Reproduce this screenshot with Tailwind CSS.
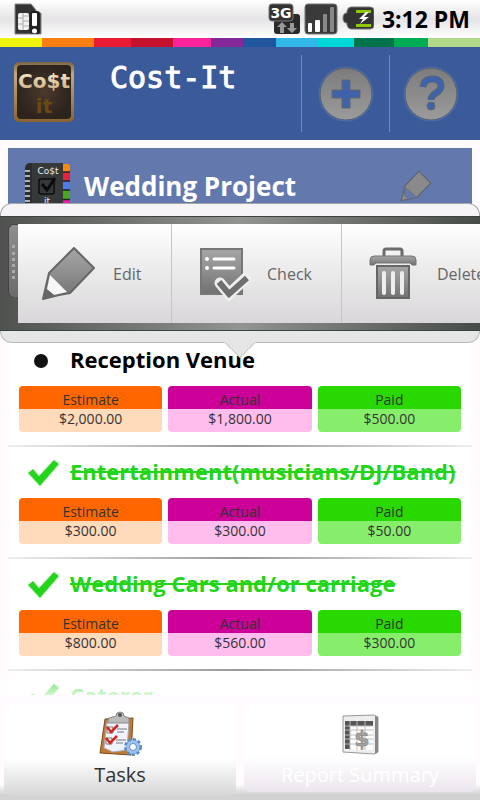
<!DOCTYPE html>
<html lang="en">
<head>
  <meta charset="UTF-8" />
  <meta name="viewport" content="width=device-width, initial-scale=1" />
  <title>Cost-It</title>
  <script src="https://cdn.jsdelivr.net/npm/@tailwindcss/browser@4"></script>
</head>
<body class="bg-[#fffbff] font-['Open_Sans','Noto_Sans',sans-serif] text-black h-screen flex flex-col overflow-hidden">

  <!-- Status bar -->
  <div class="h-[38px] shrink-0 flex items-center justify-between pl-3 pr-[10px] bg-linear-to-b from-white via-[#e6e4e6] to-white">
    <svg class="w-8 h-8" viewBox="0 0 32 32" aria-label="SIM card">
      <path d="M3 1h16l5 6v3h5v21H3z" fill="#333" stroke="#888" stroke-width="1"/>
      <rect x="6" y="10" width="11" height="17" rx="2" fill="#f2f2f2"/>
      <path d="M6 15h5M6 21h5M11 10v17M11 13h6M11 18h6M11 23h6" stroke="#aaa" fill="none"/>
      <rect x="18" y="8" width="10" height="23" rx="3" fill="#222"/>
      <rect x="20" y="10" width="5" height="13" rx="1" fill="#fff"/>
      <circle cx="22.500" cy="28" r="2.500" fill="#fff"/>
    </svg>
    <div class="flex items-center gap-1">
      <svg class="w-8 h-8" viewBox="0 0 32 32" aria-label="3G">
        <rect x="6" y="11" width="26" height="20" rx="3" fill="#2a2a2a"/>
        <rect x="1" y="1" width="24" height="17" rx="3" fill="#333" stroke="#777"/>
        <text x="13" y="15" text-anchor="middle" font-family="DejaVu Sans" font-weight="bold" font-size="14" fill="#fff">3G</text>
        <path d="M14 19l5 5h-3v6h-4v-6H9zM24 30l-5-5h3v-5h4v5h3z" fill="#999"/>
      </svg>
      <svg class="w-[34px] h-8" viewBox="0 0 34 32" aria-label="Signal">
        <rect x="1" y="1" width="32" height="30" rx="3" fill="#3a3a3a" stroke="#777"/>
        <rect x="4" y="20" width="4" height="9" rx="1" fill="#fff"/>
        <rect x="11" y="17" width="5" height="12" rx="1" fill="#fff"/>
        <rect x="19" y="11" width="4" height="18" rx="1" fill="#888"/>
        <rect x="26" y="4" width="4" height="25" rx="1" fill="#888"/>
      </svg>
      <svg class="w-8 h-8" viewBox="0 0 32 32" aria-label="Battery charging">
        <path d="M9 4h19q4 0 4 4v14q0 4-4 4H9q-3 0-4-4v-2q-4 0-4-5t4-5V8q1-4 4-4z" fill="#333" stroke="#777"/>
        <path d="M14 7h15v3H14zM14 21h15v3H14z" fill="#8fc800"/>
        <path d="M24 9l-7 7h4l-3 5 9-7h-5l5-5z" fill="#fff"/>
      </svg>
      <span class="ml-1 text-[23px] leading-8 font-bold">3:12 PM</span>
    </div>
  </div>

  <!-- Colour stripe -->
  <div class="h-[9px] shrink-0 flex">
    <i class="grow-42 bg-[#f0f40c]"></i>
    <i class="grow-52 bg-[#fb7f12]"></i>
    <i class="grow-37 bg-[#e91a33]"></i>
    <i class="grow-42 bg-[#c4122f]"></i>
    <i class="grow-38 bg-[#fb2399]"></i>
    <i class="grow-32 bg-[#84289a]"></i>
    <i class="grow-33 bg-[#20569e]"></i>
    <i class="grow-42 bg-[#31b8e9]"></i>
    <i class="grow-36 bg-[#00d7d7]"></i>
    <i class="grow-40 bg-[#00734b]"></i>
    <i class="grow-34 bg-[#00ac53]"></i>
    <i class="grow-52 bg-[#b3d88a]"></i>
  </div>

  <!-- Header -->
  <header class="h-[93px] shrink-0 bg-[#3b5a9a] flex items-center">
    <svg class="w-[60px] h-[60px] ml-[14px] mb-1" viewBox="0 0 60 60" aria-label="Cost it logo">
      <defs>
        <linearGradient id="gold" x1="0" y1="0" x2="0" y2="1"><stop offset="0" stop-color="#7b6445"/><stop offset=".2" stop-color="#c9a878"/><stop offset="1" stop-color="#8a6430"/></linearGradient>
        <radialGradient id="brown"><stop offset="0" stop-color="#4b392c"/><stop offset="1" stop-color="#2c241d"/></radialGradient>
        <linearGradient id="cream" x1="0" y1="0" x2="0" y2="1"><stop offset="0" stop-color="#fff0d0"/><stop offset="1" stop-color="#c3a67c"/></linearGradient>
      </defs>
      <rect width="60" height="60" rx="5" fill="url(#gold)"/>
      <rect x="3" y="3" width="54" height="54" rx="4" fill="url(#brown)"/>
      <text x="30" y="26" text-anchor="middle" font-family="DejaVu Sans" font-weight="bold" font-size="20" fill="url(#cream)">Co$t</text>
      <text x="30" y="51" text-anchor="middle" font-family="DejaVu Sans" font-weight="bold" font-size="20" fill="#6b4814">it</text>
    </svg>
    <h1 class="ml-9 mb-8 grow font-['DejaVu_Sans_Mono',monospace] text-[30px] leading-9 text-white [-webkit-text-stroke:1px_white]">Cost-It</h1>
    <div class="flex h-[77px]">
      <button aria-label="Add" class="w-[88px] border-l border-[#7088bb] flex items-center justify-center">
        <svg class="w-14 h-14" viewBox="0 0 56 56">
          <defs><linearGradient id="disc" x1="0" y1="0" x2="0" y2="1"><stop offset="0" stop-color="#7c7c7c"/><stop offset="1" stop-color="#9b9b9b"/></linearGradient></defs>
          <circle cx="28" cy="28" r="27.500" fill="#5574b4" opacity=".7"/>
          <circle cx="28" cy="28" r="26" fill="url(#disc)" stroke="#55606f"/>
          <path d="M24 14h8v10h10v8H32v10h-8V32H14v-8h10z" fill="#3f62aa" stroke="#666" stroke-width="1"/>
        </svg>
      </button>
      <button aria-label="Help" class="w-[91px] border-l border-[#7088bb] flex items-center justify-center pr-2">
        <svg class="w-14 h-14" viewBox="0 0 56 56">
          <circle cx="28" cy="28" r="27.500" fill="#5574b4" opacity=".7"/>
          <circle cx="28" cy="28" r="26" fill="url(#disc)" stroke="#55606f"/>
          <path d="M20 21q1-8 9-8 9 0 9 7 0 4-5 7-5 3-5 7" fill="none" stroke="#666" stroke-width="7"/>
          <path d="M20 21q1-8 9-8 9 0 9 7 0 4-5 7-5 3-5 7" fill="none" stroke="#3f62aa" stroke-width="5.500"/>
          <circle cx="28" cy="40" r="4" fill="#3f62aa" stroke="#666"/>
        </svg>
      </button>
    </div>
  </header>

  <!-- Task list with the quick action popup over it -->
  <main class="relative grow min-h-0 overflow-hidden px-2 pt-2">
    <section class="h-[187px] bg-[#6379ae] flex items-start pt-[14px] pl-4 pr-10">
      <svg class="w-12 h-14 shrink-0" viewBox="0 0 48 56" aria-label="Notebook">
        <rect x="37" y="2" width="9" height="8" rx="3" fill="#fb8a0c"/>
        <rect x="37" y="10" width="9" height="9" fill="#e8203c"/>
        <rect x="37" y="19" width="9" height="9" fill="#4d7ce8"/>
        <rect x="37" y="28" width="9" height="10" fill="#4aa81c"/>
        <rect x="37" y="38" width="9" height="10" fill="#f21ea8"/>
        <path d="M37 10h9M37 19h9M37 28h9M37 37.500h9" stroke="#222" stroke-width="1.500"/>
        <rect x="1" y="1" width="38" height="55" rx="5" fill="#2b2d2d"/>
        <path d="M8 1h31v55H8z" fill="#35393a"/>
        <path d="M1 9h5M1 14h5M1 19h5M1 24h5M1 29h5M1 34h5M1 39h5" stroke="#ddd" stroke-width="1.500"/>
        <text x="24" y="12" text-anchor="middle" font-family="DejaVu Sans" font-size="9" fill="#eee">Co$t</text>
        <rect x="15" y="17" width="15" height="15" rx="2" fill="none" stroke="#0c0c0c" stroke-width="1.500"/>
        <path d="M18 22l5 6 8-12" fill="none" stroke="#0a0a0a" stroke-width="3"/>
        <text x="23" y="42" text-anchor="middle" font-family="DejaVu Sans" font-size="9" fill="#eee">it</text>
      </svg>
      <h2 class="ml-3 mt-[6px] grow text-[26px] leading-9 font-bold text-white">Wedding Project</h2>
      <button aria-label="Edit project" class="mt-2">
        <svg class="w-8 h-8" viewBox="0 0 54 54">
          <path d="M32 2L52 22 29 46 2 52 8 27z" fill="#8a8a8a" stroke="#5e6370" stroke-width="2"/>
          <path d="M9 29l19 17-14 3-7-7z" fill="#6379ae" stroke="#666"/>
        </svg>
      </button>
    </section>

    <ul id="taskList" class="bg-white"></ul>

    <!-- Quick action popup -->
    <div class="absolute left-0 right-0 top-[63px]">
      <div class="h-[13px] bg-[#f6f4f6] border border-b-0 border-[#a3a6a8] rounded-t-xl"></div>
      <div class="flex py-[7px] bg-linear-to-r from-[#505250] via-[#929492] to-[#484c48] border-y border-[#3c443e] overflow-hidden">
        <div class="w-[18px] shrink-0 flex justify-end">
          <div class="w-[10px] h-[73px] rounded-l-md bg-linear-to-b from-[#8e8e8e] to-[#6c6c6c] border-l border-t border-[#444] flex justify-center pt-5">
            <div class="w-[3px] h-[34px] border-l-3 border-dotted border-[#aaa]"></div>
          </div>
        </div>
        <div class="flex h-[99px] shrink-0 text-base text-[#666] bg-linear-to-b from-white via-[#efeeef] via-40% to-[#d9d7d9]">
          <button class="w-[154px] flex items-center gap-4 pl-[23px] border-r border-[#c6c4c6]">
            <svg class="w-14 h-14 shrink-0" viewBox="0 0 56 56">
              <defs><linearGradient id="lead" x1="0" y1="0" x2="0" y2="1"><stop offset="0" stop-color="#a5a5a5"/><stop offset=".5" stop-color="#8e8e8e"/><stop offset="1" stop-color="#707070"/></linearGradient></defs>
              <path d="M33 2L53 22 29 47 18 49 2 53 8 27z" fill="url(#lead)" stroke="#666" stroke-width="2" stroke-linejoin="round"/>
              <path d="M9 29L26 46 13 49 6 43z" fill="#f6f6f6"/>
              <path d="M5 43l8 6-11 4z" fill="#666"/>
            </svg>
            <span>Edit</span>
          </button>
          <button class="w-[170px] flex items-center gap-4 pl-[23px] border-r border-[#c6c4c6]">
            <svg class="w-14 h-14 shrink-0" viewBox="0 0 56 56">
              <path d="M6 3h41v45H6z" fill="url(#lead)" stroke="#777" stroke-width="2"/>
              <path d="M19 13h20M19 22h20" stroke="#fff" stroke-width="3" stroke-linecap="round"/>
              <circle cx="12" cy="13" r="2" fill="#fff"/><circle cx="12" cy="22" r="2" fill="#fff"/>
              <path d="M25 37l9 11 17-16" fill="none" stroke="#f0eff0" stroke-width="11" stroke-linecap="round"/>
              <path d="M24 36l10 12 18-16" fill="none" stroke="#6f6f6f" stroke-width="6"/>
            </svg>
            <span>Check</span>
          </button>
          <button class="w-[170px] flex items-center gap-4 pl-[23px]">
            <svg class="w-14 h-14 shrink-0" viewBox="0 0 56 56">
              <path d="M19 10V5q0-2 2-2h14q2 0 2 2v5" fill="none" stroke="#6c6c6c" stroke-width="3"/>
              <path d="M9 10h38q4 0 4 4v5h-4l-2-2H11l-2 2H5v-5q0-4 4-4z" fill="url(#lead)" stroke="#777"/>
              <path d="M12 20h32v32H12z" fill="url(#lead)" stroke="#666" stroke-width="2"/>
              <path d="M19 27v20M28 27v20M37 27v20" stroke="#eee" stroke-width="4" stroke-linecap="round"/>
            </svg>
            <span>Delete</span>
          </button>
        </div>
      </div>
      <div class="h-[12px] bg-[#e6e6e6] border border-t-0 border-[#b8bab8] rounded-b-xl"></div>
      <svg class="absolute left-1/2 top-full -translate-x-1/2 -mt-px w-8 h-4" viewBox="0 0 32 16">
        <path d="M0 0h32L16 16z" fill="#e6e6e6"/>
        <path d="M1 0.500L16 15.500 31 0.500" fill="none" stroke="#b8bab8"/>
      </svg>
    </div>

    <div class="absolute inset-x-0 bottom-0 h-6 bg-linear-to-b from-white/10 to-white/80"></div>
  </main>

  <!-- Tabs -->
  <nav class="h-[105px] shrink-0 flex gap-2 px-1 pt-2 bg-linear-to-b from-[#fffbff] from-85% to-[#d2d2d2] to-95%">
    <a href="#tasks" class="flex-1 flex flex-col items-center pt-2 mb-1 rounded-lg bg-linear-to-b from-white from-60% to-[#d6d6d6] text-[#333]">
      <svg class="w-12 h-12" viewBox="0 0 48 48">
        <path d="M9 8l28-1-2 37-31-2z" fill="#c07a32" stroke="#7d4c1c"/>
        <path d="M11 10h22l-2 29-14 2-9-4z" fill="#eef3fd" stroke="#aab"/>
        <path d="M11 12l2-5 7-2q0-4 4-4t4 4l5 2v5z" fill="#bbb" stroke="#888"/>
        <circle cx="24" cy="4" r="2" fill="#555"/>
        <path d="M11 16h6v6h-6zM10 27h6v6h-6z" fill="#fff" stroke="#777"/>
        <path d="M21 18h10M21 21h7M20 29h10M20 32h7" stroke="#777"/>
        <path d="M11 16l4 5 7-7M10 27l4 5 7-7" fill="none" stroke="#d8201c" stroke-width="2.500"/>
        <circle cx="37" cy="36" r="7.500" fill="#8bb7e6" stroke="#5b8cc4" stroke-width="3" stroke-dasharray="3 2"/>
        <circle cx="37" cy="36" r="6.500" fill="#9cc3ec"/>
        <circle cx="37" cy="36" r="3.500" fill="#fff" stroke="#5b8cc4"/>
      </svg>
      <span class="text-xl leading-8">Tasks</span>
    </a>
    <a href="#report" class="flex-1 flex flex-col items-center pt-2 mb-2 rounded-lg bg-linear-to-b from-white from-60% to-[#ece6ee] text-white">
      <svg class="w-12 h-12" viewBox="0 0 48 48">
        <path d="M7 5l31-1 4 2v35l-4 2L7 41z" fill="#eee" stroke="#999"/>
        <path d="M39 5l3 1v35l-3 2z" fill="#888"/>
        <path d="M9 10h28v29H9z" fill="#fff"/>
        <path d="M9 10h28v5H9zM9 15h5v23H9z" fill="#555"/>
        <path d="M9 15h28M9 19h28M9 24h28M9 28h28M9 33h28M14 10v29M21 10v29M29 10v29" stroke="#bbb"/>
        <text x="26" y="35" text-anchor="middle" font-family="DejaVu Sans" font-weight="bold" font-size="22" fill="#a2a2a2" stroke="#777" stroke-width=".5">$</text>
      </svg>
      <span class="text-xl leading-8">Report Summary</span>
    </a>
  </nav>

<script>
  const taskList = document.getElementById('taskList');

  const tasks = [
    { name: 'Reception Venue', done: false, costs: ['$2,000.00', '$1,800.00', '$500.00'] },
    { name: 'Entertainment(musicians/DJ/Band)', done: true, costs: ['$300.00', '$300.00', '$50.00'] },
    { name: 'Wedding Cars and/or carriage', done: true, costs: ['$800.00', '$560.00', '$300.00'] },
    { name: 'Caterer', done: true, costs: null },
  ];

  const tick = `<path d="M2 16l5-4 6 7L28 3l5 4-19 22z" fill="#22d518" stroke="#8ae884" stroke-width="1"/>`;
  const dot = `<circle cx="15" cy="16" r="7" fill="#111"/>`;

  const card = (label, value, top, bottom) => `
    <div class="flex-1 rounded overflow-hidden text-center text-sm text-[#333]">
      <div class="h-[23px] pt-1 leading-5 ${top}">${label}</div>
      <div class="h-[23px] leading-5 ${bottom}">${value}</div>
    </div>`;

  taskList.innerHTML = tasks.map(t => `
    <li class="h-[112px] flex flex-col">
      <div class="flex items-start h-[51px] pt-2 pl-[18px]">
        <svg class="w-9 h-8 mt-[2px] shrink-0" viewBox="0 0 36 32">${t.done ? tick : dot}</svg>
        <span class="ml-2 text-[22px] leading-8 font-bold whitespace-nowrap ${t.done ? 'text-[#22d518] line-through decoration-2' : ''}">${t.name}</span>
      </div>
      ${t.costs ? `<div class="flex gap-[6px] px-[11px]">
        ${card('Estimate', t.costs[0], 'bg-[#ff6600]', 'bg-[#ffdabb]')}
        ${card('Actual', t.costs[1], 'bg-[#cc0099]', 'bg-[#ffbdee]')}
        ${card('Paid', t.costs[2], 'bg-[#28d800]', 'bg-[#87ee6c]')}
      </div>` : ''}
      <div class="mt-auto h-[2px] bg-linear-to-r from-[#eee] via-[#999] to-[#eee]"></div>
    </li>
  `).join('');
</script>
</body>
</html>
